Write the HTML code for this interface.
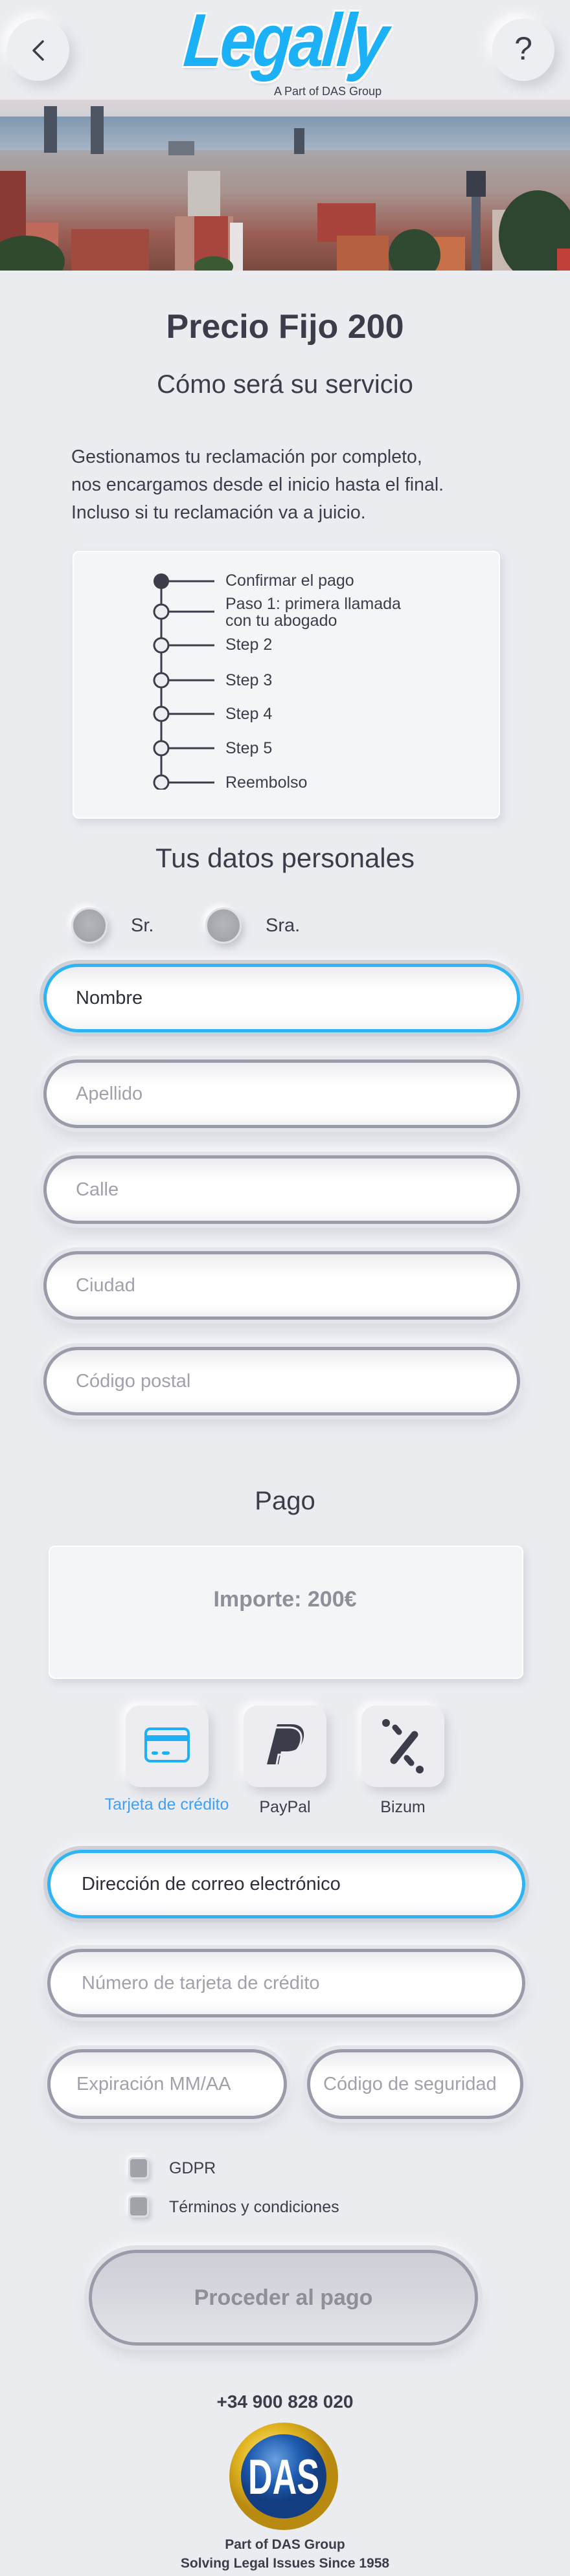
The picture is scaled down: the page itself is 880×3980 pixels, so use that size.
<!DOCTYPE html>
<html><head><meta charset="utf-8">
<style>
*{margin:0;padding:0;box-sizing:border-box}
body{width:880px;height:3980px;background:#ebecf0;font-family:"Liberation Sans",sans-serif;color:#3b3d4a;position:relative;overflow:hidden}
.a{position:absolute}
.c{text-align:center;left:0;width:880px}
.circ{border-radius:50%;background:#eceef2;box-shadow:8px 10px 18px rgba(170,172,185,.45),-8px -8px 16px rgba(255,255,255,.9)}
.inp{position:absolute;border-radius:60px;background:linear-gradient(#ececf0 0%,#fff 35%,#fff 80%,#f3f3f6 100%);border:5px solid #9a9ba8;box-shadow:0 0 0 6px #e4e5ea,0 12px 22px rgba(170,172,185,.35),0 -8px 16px rgba(255,255,255,.9);font-size:29px;color:#a0a1ac;padding-left:45px;display:flex;align-items:center}
.foc{border-color:#2db4f5;color:#2c2e3a;box-shadow:0 0 0 6px #cfd0d8,0 12px 22px rgba(170,172,185,.35),0 -8px 16px rgba(255,255,255,.9)}
.card{position:absolute;background:#f4f5f7;border:2px solid #fff;border-radius:10px;box-shadow:4px 6px 12px rgba(170,172,185,.35)}
.sq{position:absolute;width:128px;height:126px;border-radius:22px;background:#ededf1;box-shadow:6px 8px 14px rgba(170,172,185,.45),-6px -6px 12px rgba(255,255,255,.9)}
.rad{position:absolute;width:56px;height:56px;border-radius:50%;background:radial-gradient(circle at 50% 45%,#b5b6bb,#9c9da3);border:3px solid #dfe0e5;box-shadow:4px 6px 10px rgba(160,162,175,.5),-4px -4px 8px #fff}
.chk{position:absolute;width:32px;height:34px;border-radius:7px;background:#a2a3a9;border:3px solid #dcdde2;box-shadow:3px 4px 7px rgba(160,162,175,.5),-3px -3px 6px #fff}
.step{position:absolute;left:348px;font-size:25px;line-height:26px;color:#3b3d4a}
</style></head><body>

<!-- header -->
<div class="a circ" style="left:11px;top:29px;width:96px;height:96px"></div>
<svg class="a" style="left:40px;top:58px" width="40" height="40"><path d="M26 6 L12 20 L26 34" stroke="#3b3d4a" stroke-width="3.5" fill="none" stroke-linecap="round" stroke-linejoin="round"/></svg>
<div class="a circ" style="left:760px;top:29px;width:96px;height:96px"></div>
<div class="a" style="left:788px;top:46px;width:40px;text-align:center;font-size:50px;color:#3b3d4a">?</div>
<div class="a" style="left:250px;top:-8px;width:380px;text-align:center;font-size:116px;font-weight:bold;font-style:italic;color:#1cb0f6;letter-spacing:-5px;line-height:140px;text-shadow:3px 3px 0 #fff,-3px -3px 0 #fff,3px -3px 0 #fff,-3px 3px 0 #fff,0 3px 6px rgba(0,0,0,.2);transform:scaleX(0.85) skewX(-6deg)">Legally</div>
<div class="a" style="left:423px;top:131px;font-size:18px;color:#3b3d4a">A Part of DAS Group</div>

<!-- photo -->
<svg class="a" style="left:0;top:154px" width="880" height="264" viewBox="0 0 880 264">
<defs><linearGradient id="sk" x1="0" y1="0" x2="0" y2="1"><stop offset="0" stop-color="#dcd3d8"/><stop offset="1" stop-color="#cfd0d6"/></linearGradient>
<linearGradient id="sea" x1="0" y1="0" x2="0" y2="1"><stop offset="0" stop-color="#7f97b0"/><stop offset="1" stop-color="#a9b6c6"/></linearGradient>
<linearGradient id="ct" x1="0" y1="0" x2="0" y2="1"><stop offset="0" stop-color="#a8a6aa"/><stop offset=".35" stop-color="#a8938e"/><stop offset=".7" stop-color="#9a5e55"/><stop offset="1" stop-color="#7a4a40"/></linearGradient></defs>
<rect width="880" height="26" fill="url(#sk)"/>
<rect y="26" width="880" height="56" fill="url(#sea)"/>
<rect y="78" width="880" height="186" fill="url(#ct)"/>
<rect x="68" y="10" width="20" height="72" fill="#4a5260"/><rect x="140" y="10" width="20" height="74" fill="#4f5663"/>
<rect x="454" y="44" width="16" height="40" fill="#4a5260"/><rect x="260" y="64" width="40" height="22" fill="#6c7480"/>
<rect x="290" y="110" width="50" height="90" fill="#c8c2be"/>
<rect x="270" y="180" width="90" height="84" fill="#b8877a"/><rect x="300" y="180" width="52" height="84" fill="#a8453f"/>
<rect x="355" y="190" width="20" height="74" fill="#e8e4e4"/>
<rect x="110" y="200" width="120" height="64" fill="#a04a40"/><rect x="0" y="110" width="40" height="154" fill="#8a3a34"/>
<rect x="40" y="190" width="50" height="74" fill="#c06a5c"/><rect x="490" y="160" width="90" height="60" fill="#a8443c"/>
<rect x="520" y="210" width="80" height="54" fill="#b56040"/><rect x="628" y="212" width="90" height="52" fill="#c8704a"/>
<rect x="728" y="150" width="14" height="114" fill="#5a6070"/><rect x="720" y="110" width="30" height="40" fill="#3a3e4a"/>
<rect x="760" y="170" width="60" height="94" fill="#c8b8b0"/>
<ellipse cx="40" cy="250" rx="60" ry="40" fill="#2f4a2e"/><ellipse cx="830" cy="210" rx="60" ry="70" fill="#2e4630"/>
<ellipse cx="640" cy="240" rx="40" ry="40" fill="#2f4a30"/><ellipse cx="330" cy="258" rx="30" ry="16" fill="#3a5a34"/>
<rect x="860" y="230" width="20" height="34" fill="#c0403a"/>
</svg>

<!-- title -->
<div class="a c" style="top:475px;font-size:52px;font-weight:bold;color:#3b3d4a">Precio Fijo 200</div>
<div class="a c" style="top:572px;font-size:40px">Cómo será su servicio</div>
<div class="a" style="left:110px;top:685px;font-size:28.5px;line-height:43px;width:700px">Gestionamos tu reclamación por completo,<br>nos encargamos desde el inicio hasta el final.<br>Incluso si tu reclamación va a juicio.</div>

<!-- timeline card -->
<div class="card" style="left:112px;top:851px;width:660px;height:414px"></div>
<svg class="a" style="left:230px;top:880px" width="110" height="340">
<line x1="19" y1="18" x2="19" y2="329" stroke="#3b3d4a" stroke-width="3"/>
<g stroke="#3b3d4a" stroke-width="3">
<line x1="19" y1="18" x2="101" y2="18"/><line x1="19" y1="65" x2="101" y2="65"/><line x1="19" y1="117" x2="101" y2="117"/><line x1="19" y1="171" x2="101" y2="171"/><line x1="19" y1="223" x2="101" y2="223"/><line x1="19" y1="276" x2="101" y2="276"/><line x1="19" y1="329" x2="101" y2="329"/></g>
<circle cx="19" cy="18" r="12" fill="#3b3d4a"/>
<g fill="#eceef2" stroke="#3b3d4a" stroke-width="3"><circle cx="19" cy="65" r="11"/><circle cx="19" cy="117" r="11"/><circle cx="19" cy="171" r="11"/><circle cx="19" cy="223" r="11"/><circle cx="19" cy="276" r="11"/><circle cx="19" cy="329" r="11"/></g>
</svg>
<div class="step" style="top:884px">Confirmar el pago</div>
<div class="step" style="top:920px">Paso 1: primera llamada<br>con tu abogado</div>
<div class="step" style="top:983px">Step 2</div>
<div class="step" style="top:1038px">Step 3</div>
<div class="step" style="top:1090px">Step 4</div>
<div class="step" style="top:1143px">Step 5</div>
<div class="step" style="top:1196px">Reembolso</div>

<div class="a c" style="top:1302px;font-size:42px">Tus datos personales</div>
<div class="rad" style="left:110px;top:1402px"></div>
<div class="a" style="left:202px;top:1414px;font-size:29px">Sr.</div>
<div class="rad" style="left:317px;top:1402px"></div>
<div class="a" style="left:410px;top:1414px;font-size:29px">Sra.</div>

<div class="inp foc" style="left:67px;top:1489px;width:736px;height:106px">Nombre</div>
<div class="inp" style="left:67px;top:1637px;width:736px;height:106px">Apellido</div>
<div class="inp" style="left:67px;top:1785px;width:736px;height:106px">Calle</div>
<div class="inp" style="left:67px;top:1933px;width:736px;height:106px">Ciudad</div>
<div class="inp" style="left:67px;top:2081px;width:736px;height:106px">Código postal</div>

<div class="a c" style="top:2297px;font-size:40px">Pago</div>
<div class="card" style="left:75px;top:2388px;width:733px;height:206px"></div>
<div class="a c" style="top:2452px;font-size:34px;font-weight:bold;color:#8e8f98">Importe: 200€</div>

<div class="sq" style="left:194px;top:2635px"></div>
<svg class="a" style="left:222px;top:2668px" width="72" height="56"><rect x="3" y="3" width="66" height="50" rx="7" fill="none" stroke="#1cb0f6" stroke-width="4"/><rect x="3" y="13" width="66" height="9" fill="#1cb0f6"/><rect x="12" y="38" width="10" height="5" rx="2.5" fill="#1cb0f6"/><rect x="28" y="38" width="12" height="5" rx="2.5" fill="#1cb0f6"/></svg>
<div class="sq" style="left:376px;top:2635px"></div>
<svg class="a" style="left:406px;top:2662px" width="70" height="72"><path d="M22 2 H44 C60 2 66 12 62 26 C58 40 48 44 36 44 H28 L24 64 H6 Z" fill="#3b3d4a"/><path d="M16 8 H38 C54 8 60 18 56 32 C52 46 42 50 30 50 H22 L18 70 H0 Z" fill="none" stroke="#ebecf0" stroke-width="3" transform="translate(2,-1)"/></svg>
<div class="sq" style="left:558px;top:2635px"></div>
<svg class="a" style="left:588px;top:2650px" width="72" height="95"><circle cx="8" cy="12" r="6" fill="#3b3d4a"/><line x1="22" y1="19" x2="28" y2="26" stroke="#3b3d4a" stroke-width="9" stroke-linecap="round"/><line x1="52" y1="30" x2="20" y2="70" stroke="#3b3d4a" stroke-width="11" stroke-linecap="round"/><line x1="40" y1="66" x2="47" y2="74" stroke="#3b3d4a" stroke-width="9" stroke-linecap="round"/><circle cx="60" cy="84" r="6" fill="#3b3d4a"/></svg>
<div class="a" style="left:150px;width:215px;text-align:center;top:2774px;font-size:25px;color:#3fa0f5">Tarjeta de crédito</div>
<div class="a" style="left:376px;width:128px;text-align:center;top:2778px;font-size:25px">PayPal</div>
<div class="a" style="left:558px;width:128px;text-align:center;top:2778px;font-size:25px">Bizum</div>

<div class="inp foc" style="left:73px;top:2858px;width:738px;height:106px;padding-left:48px">Dirección de correo electrónico</div>
<div class="inp" style="left:73px;top:3011px;width:738px;height:106px;padding-left:48px">Número de tarjeta de crédito</div>
<div class="inp" style="left:73px;top:3166px;width:370px;height:108px;padding-left:40px">Expiración MM/AA</div>
<div class="inp" style="left:474px;top:3166px;width:334px;height:108px;padding-left:20px">Código de seguridad</div>

<div class="chk" style="left:198px;top:3333px"></div>
<div class="a" style="left:261px;top:3336px;font-size:25px">GDPR</div>
<div class="chk" style="left:198px;top:3392px"></div>
<div class="a" style="left:261px;top:3396px;font-size:25px">Términos y condiciones</div>

<div class="a" style="left:137px;top:3476px;width:601px;height:148px;border-radius:80px;background:linear-gradient(#cdced6,#e2e3e8);border:5px solid #9a9ba8;box-shadow:0 0 0 7px #e0e1e7,0 14px 24px rgba(170,172,185,.4),0 -10px 18px rgba(255,255,255,.9);display:flex;align-items:center;justify-content:center;font-size:34px;font-weight:bold;color:#8e8f98">Proceder al pago</div>

<div class="a c" style="top:3695px;font-size:28px;font-weight:bold;color:#3b3d4a">+34 900 828 020</div>
<svg class="a" style="left:352px;top:3741px" width="172" height="170"><defs><radialGradient id="g" cx=".4" cy=".35"><stop offset="0" stop-color="#fff2a0"/><stop offset=".6" stop-color="#e2b622"/><stop offset="1" stop-color="#b98a10"/></radialGradient><radialGradient id="b" cx=".4" cy=".3"><stop offset="0" stop-color="#6aa0e0"/><stop offset=".6" stop-color="#1e5cb0"/><stop offset="1" stop-color="#123d80"/></radialGradient></defs><ellipse cx="86" cy="85" rx="84" ry="83" fill="url(#g)"/><ellipse cx="86" cy="85" rx="66" ry="65" fill="url(#b)"/><text x="86" y="112" text-anchor="middle" font-family="Liberation Sans Narrow,Liberation Sans,sans-serif" font-weight="bold" font-size="76" fill="#fff" textLength="110" lengthAdjust="spacingAndGlyphs">DAS</text></svg>
<div class="a c" style="top:3917px;font-size:21px;font-weight:bold;line-height:29px;color:#3b3d4a">Part of DAS Group<br>Solving Legal Issues Since 1958</div>
</body></html>
